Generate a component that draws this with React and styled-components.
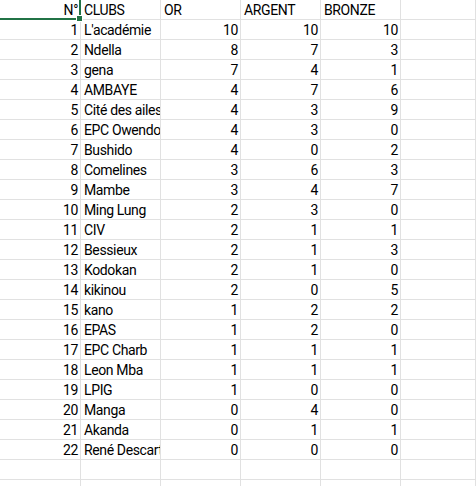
import React from 'react';
import styled, { createGlobalStyle } from 'styled-components';

const rows = [
    [1, "L'académie", 10, 10, 10],
    [2, 'Ndella', 8, 7, 3],
    [3, 'gena', 7, 4, 1],
    [4, 'AMBAYE', 4, 7, 6],
    [5, 'Cité des ailes', 4, 3, 9],
    [6, 'EPC Owendo', 4, 3, 0],
    [7, 'Bushido', 4, 0, 2],
    [8, 'Comelines', 3, 6, 3],
    [9, 'Mambe', 3, 4, 7],
    [10, 'Ming Lung', 2, 3, 0],
    [11, 'CIV', 2, 1, 1],
    [12, 'Bessieux', 2, 1, 3],
    [13, 'Kodokan', 2, 1, 0],
    [14, 'kikinou', 2, 0, 5],
    [15, 'kano', 1, 2, 2],
    [16, 'EPAS', 1, 2, 0],
    [17, 'EPC Charb', 1, 1, 1],
    [18, 'Leon Mba', 1, 1, 1],
    [19, 'LPIG', 1, 0, 0],
    [20, 'Manga', 0, 4, 0],
    [21, 'Akanda', 0, 1, 1],
    [22, 'René Descartes', 0, 0, 0],
];

const App = () => {
    return (
        <>
            <GlobalStyle />
            <Sheet>
                <Selection />
                <Handle />
                <Cell $align="right">N°</Cell>
                <Cell>CLUBS</Cell>
                <Cell>OR</Cell>
                <Cell>ARGENT</Cell>
                <Cell>BRONZE</Cell>
                <Cell />
                {rows.map((r) => (
                    <React.Fragment key={r[0]}>
                        <Cell $align="right">{r[0]}</Cell>
                        <Cell>{r[1]}</Cell>
                        <Cell $align="right">{r[2]}</Cell>
                        <Cell $align="right">{r[3]}</Cell>
                        <Cell $align="right">{r[4]}</Cell>
                        <Cell />
                    </React.Fragment>
                ))}
                {Array.from({ length: 12 }).map((_, i) => <Cell key={'e' + i} />)}
            </Sheet>
        </>
    )
}

export default App

const GlobalStyle = createGlobalStyle`
    html, body {
        margin: 0;
        padding: 0;
        background: #fff;
        overflow: hidden;
    }
`
const Sheet = styled.div`
    position: relative;
    display: grid;
    grid-template-columns: 81px 80px 80px 80px 80px 1fr;
    grid-auto-rows: 20px;
    width: 476px;
    height: 486px;
    overflow: hidden;
    font-family: Roboto, "Liberation Sans", sans-serif;
    font-size: 14px;
    letter-spacing: -0.37px;
    color: #000;
`
const Cell = styled.div`
    box-sizing: border-box;
    border-right: 1px solid #e1e1e1;
    border-bottom: 1px solid #e1e1e1;
    padding: 0 2px 0 3px;
    line-height: 20px;
    white-space: nowrap;
    overflow: hidden;
    text-align: ${(p) => p.$align || 'left'};
`
const Selection = styled.div`
    position: absolute;
    left: -10px;
    top: -10px;
    width: 91px;
    height: 30px;
    box-sizing: border-box;
    border: 2px solid #217346;
    pointer-events: none;
`
const Handle = styled.div`
    position: absolute;
    left: 76px;
    top: 15px;
    width: 7px;
    height: 7px;
    box-sizing: border-box;
    background: #217346;
    border: 1px solid #fff;
`
